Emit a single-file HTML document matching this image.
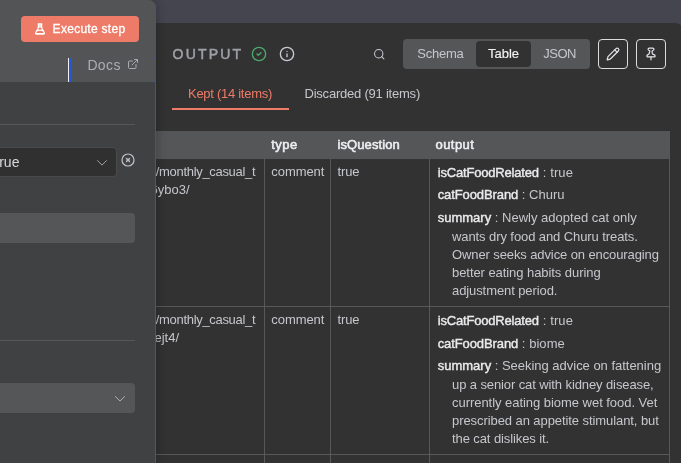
<!DOCTYPE html>
<html><head><meta charset="utf-8"><title>n8n node output</title>
<style>
html,body{margin:0;padding:0}
body{width:681px;height:463px;overflow:hidden;position:relative;background:#44454f;font-family:"Liberation Sans",sans-serif;font-size:13px;color:#c6c7cc}
.abs{position:absolute}
.t{position:absolute;white-space:nowrap;line-height:18px;height:18px}
.k{color:#ebebee;-webkit-text-stroke:.4px #ebebee}
.kh{color:#efeff2;-webkit-text-stroke:.55px #efeff2}
#out{left:150px;top:23px;width:532.5px;height:450px;background:#323232;border-radius:0 8px 0 0}
#left{left:0;top:0;width:155px;height:463px;background:#404143;border-right:1px solid #555658;border-radius:0 8px 0 0;box-shadow:2px 0 10px rgba(0,0,0,.2)}
#lhead{left:0;top:0;width:156px;height:82px;background:#535456;border-radius:0 8px 0 0}
.vline{position:absolute;width:1px;background:#585858}
.hline{position:absolute;height:1px;background:#585858}
.g{left:0;top:0;width:681px;height:463px;will-change:transform}
svg.i{position:absolute;fill:none;stroke-width:2;stroke-linecap:round;stroke-linejoin:round;overflow:visible}
</style></head><body>

<!-- OUTPUT PANEL -->
<div id="out" class="abs"></div>
<svg class="i" style="left:251px;top:45.9px;stroke:#4caa6c" width="16" height="16" viewBox="0 0 24 24"><circle cx="12" cy="12" r="10"/><path d="m9 12 2 2 4-4"/></svg>
<svg class="i" style="left:278.9px;top:45.9px;stroke:#c8cad4" width="16" height="16" viewBox="0 0 24 24"><circle cx="12" cy="12" r="10"/><path d="M12 16v-4"/><path d="M12 8h.01"/></svg>

<div class="abs" style="left:172px;top:108px;width:117px;height:2px;background:#ee7b68"></div>

<svg class="i" style="left:372.8px;top:47.7px;stroke:#c8cad4" width="12.5" height="12.5" viewBox="0 0 24 24"><path d="m21 21-4.34-4.34"/><circle cx="11" cy="11" r="8"/></svg>

<div class="abs" style="left:403px;top:39px;width:187px;height:30px;background:#555658;border-radius:4px"></div>
<div class="abs" style="left:475.5px;top:41px;width:55.5px;height:26px;background:#323232;border-radius:4px"></div>

<div class="abs" style="left:598px;top:39px;width:28px;height:28px;border:1px solid #dcdde0;border-radius:4px"></div>
<div class="abs" style="left:636px;top:39px;width:28px;height:28px;border:1px solid #dcdde0;border-radius:4px"></div>
<svg class="i" style="left:606.1px;top:46.9px;stroke:#e2e3e8;stroke-width:2.1" width="14" height="14" viewBox="0 0 24 24"><path d="M21.174 6.812a1 1 0 0 0-3.986-3.987L3.842 16.174a2 2 0 0 0-.5.83l-1.321 4.352a.5.5 0 0 0 .623.622l4.353-1.32a2 2 0 0 0 .83-.497z"/><path d="m15 5 4 4"/></svg>
<svg class="i" style="left:644px;top:46.8px;stroke:#e2e3e8;stroke-width:2.1" width="14" height="14" viewBox="0 0 24 24"><path d="M12 17v5"/><path d="M9 10.76a2 2 0 0 1-1.11 1.79l-1.78.9A2 2 0 0 0 5 15.24V16a1 1 0 0 0 1 1h12a1 1 0 0 0 1-1v-.76a2 2 0 0 0-1.11-1.79l-1.78-.9A2 2 0 0 1 14 10.76V7a1 1 0 0 1 1-1 2 2 0 0 0 0-4H9a2 2 0 0 0 0 4 1 1 0 0 1 1 1z"/></svg>

<!-- TABLE -->
<div class="abs" style="left:150px;top:131px;width:520px;height:28px;background:#555658"></div>

<div class="vline" style="left:264px;top:159px;height:304px"></div>
<div class="vline" style="left:330px;top:159px;height:304px"></div>
<div class="vline" style="left:429px;top:159px;height:304px"></div>
<div class="vline" style="left:669px;top:159px;height:304px"></div>
<div class="hline" style="left:150px;top:306px;width:520px"></div>
<div class="hline" style="left:150px;top:454px;width:520px"></div>

<div class="abs g"><div id="ttl" class="t" style="left:172.6px;top:45px;font-size:14px;color:#9fa0a8;-webkit-text-stroke:.5px #9fa0a8"><span id="ttl_0" style="letter-spacing:2.173px">OUTPUT</span></div>
<div id="kept" class="t" style="left:188px;top:85px;color:#ee7b68"><span id="kept_0" style="letter-spacing:-0.277px">Kept (14 items)</span></div>
<div id="disc" class="t" style="left:304.5px;top:85px"><span id="disc_0" style="letter-spacing:-0.222px">Discarded (91 items)</span></div>
<div id="schema" class="t" style="left:417.3px;top:45px"><span id="schema_0" style="letter-spacing:-0.251px">Schema</span></div>
<div id="table" class="t" style="left:488.0px;top:45px;color:#f2f2f4;-webkit-text-stroke:.15px #f2f2f4"><span id="table_0" style="letter-spacing:-0.016px">Table</span></div>
<div id="json" class="t" style="left:543.3px;top:45px"><span id="json_0" style="letter-spacing:-0.493px">JSON</span></div>
<div id="h1" class="t" style="left:271.3px;top:136px"><span id="h1_0" class="kh" style="letter-spacing:0.430px">type</span></div>
<div id="h2" class="t" style="left:337.5px;top:136px"><span id="h2_0" class="kh" style="letter-spacing:0.098px">isQuestion</span></div>
<div id="h3" class="t" style="left:435.5px;top:136px"><span id="h3_0" class="kh" style="letter-spacing:0.441px">output</span></div>
<div id="r1a" class="t" style="left:155.8px;top:163px"><span id="r1a_0" style="letter-spacing:-0.317px">/monthly_casual_t</span></div>
<div id="r1b" class="t" style="left:150.6px;top:181px"><span id="r1b_0">6ybo3/</span></div>
<div id="r1c" class="t" style="left:271.3px;top:163px"><span id="r1c_0" style="letter-spacing:-0.067px">comment</span></div>
<div id="r1d" class="t" style="left:337.5px;top:163px"><span id="r1d_0" style="letter-spacing:-0.102px">true</span></div>
<div id="r1e" class="t" style="left:437.7px;top:164px"><span id="r1e_0" class="k" style="letter-spacing:-0.179px">isCatFoodRelated</span><span id="r1e_1" style="letter-spacing:0.136px"> : true</span></div>
<div id="r1f" class="t" style="left:437.7px;top:186px"><span id="r1f_0" class="k" style="letter-spacing:-0.098px">catFoodBrand</span><span id="r1f_1" style="letter-spacing:0.006px"> : Churu</span></div>
<div id="r1g" class="t" style="left:437.7px;top:209px"><span id="r1g_0" class="k" style="letter-spacing:0.007px">summary</span><span id="r1g_1" style="letter-spacing:0.010px"> : Newly adopted cat only</span></div>
<div id="r1h" class="t" style="left:452px;top:228px"><span id="r1h_0" style="letter-spacing:-0.088px">wants dry food and Churu treats.</span></div>
<div id="r1i" class="t" style="left:452px;top:246px"><span id="r1i_0" style="letter-spacing:-0.106px">Owner seeks advice on encouraging</span></div>
<div id="r1j" class="t" style="left:452px;top:264px"><span id="r1j_0" style="letter-spacing:-0.064px">better eating habits during</span></div>
<div id="r1k" class="t" style="left:452px;top:282px"><span id="r1k_0" style="letter-spacing:-0.092px">adjustment period.</span></div>
<div id="r2a" class="t" style="left:155.8px;top:311px"><span id="r2a_0" style="letter-spacing:-0.317px">/monthly_casual_t</span></div>
<div id="r2b" class="t" style="left:147.2px;top:329px"><span id="r2b_0">6ejt4/</span></div>
<div id="r2c" class="t" style="left:271.3px;top:311px"><span id="r2c_0" style="letter-spacing:-0.067px">comment</span></div>
<div id="r2d" class="t" style="left:337.5px;top:311px"><span id="r2d_0" style="letter-spacing:-0.102px">true</span></div>
<div id="r2e" class="t" style="left:437.7px;top:312px"><span id="r2e_0" class="k" style="letter-spacing:-0.179px">isCatFoodRelated</span><span id="r2e_1" style="letter-spacing:0.136px"> : true</span></div>
<div id="r2f" class="t" style="left:437.7px;top:335px"><span id="r2f_0" class="k" style="letter-spacing:-0.098px">catFoodBrand</span><span id="r2f_1" style="letter-spacing:0.044px"> : biome</span></div>
<div id="r2g" class="t" style="left:437.7px;top:357px"><span id="r2g_0" class="k" style="letter-spacing:0.007px">summary</span><span id="r2g_1" style="letter-spacing:-0.022px"> : Seeking advice on fattening</span></div>
<div id="r2h" class="t" style="left:452px;top:376px"><span id="r2h_0" style="letter-spacing:-0.101px">up a senior cat with kidney disease,</span></div>
<div id="r2i" class="t" style="left:452px;top:394px"><span id="r2i_0" style="letter-spacing:-0.039px">currently eating biome wet food. Vet</span></div>
<div id="r2j" class="t" style="left:452px;top:412px"><span id="r2j_0" style="letter-spacing:-0.075px">prescribed an appetite stimulant, but</span></div>
<div id="r2k" class="t" style="left:452px;top:430px"><span id="r2k_0" style="letter-spacing:-0.095px">the cat dislikes it.</span></div>
<div id="r3a" class="t" style="left:155.8px;top:459px"><span id="r3a_0" style="letter-spacing:-0.317px">/monthly_casual_t</span></div></div>
<!-- LEFT PANEL -->
<div id="left" class="abs"></div>
<div id="lhead" class="abs"></div>
<div class="abs" style="left:21px;top:16px;width:118px;height:26px;background:#ee7b68;border-radius:4px"></div>
<svg class="abs" style="left:34px;top:22px;overflow:visible" width="12" height="14" viewBox="0 0 12 14"><rect x="3.9" y="1.100" width="4.2" height="4.6" fill="#fff" fill-opacity=".8"/><path d="M4.400 1.500v4.300L1.700 10.700a.8.800 0 0 0 .7 1.200h7.200a.8.800 0 0 0 .7-1.200L7.600 5.800V1.500" fill="none" stroke="#fff" stroke-width="1.200" stroke-linejoin="round"/><path d="M2.500 8.900Q6 7.200 9.500 8.900" fill="none" stroke="#fff" stroke-width="1.300"/><path d="M2 11.700h8" stroke="#fff" stroke-width="1.600" stroke-linecap="round"/><path d="M5.200 6.300l1.600 0L6 7.300z" fill="#ee7b68"/></svg>
<div class="abs" style="left:68px;top:58px;width:1px;height:24px;background:#f0f0f4"></div>
<div class="abs" style="left:69px;top:58px;width:2px;height:24px;background:#2558d2"></div>
<div class="abs" style="left:71px;top:58px;width:1px;height:1px;background:#2558d2"></div>
<div class="abs" style="left:71px;top:81px;width:1px;height:1px;background:#2558d2"></div>
<div class="abs" style="left:154px;top:58px;width:1px;height:1px;background:#3a60c4"></div>
<div class="abs" style="left:154px;top:81px;width:1px;height:1px;background:#3a60c4"></div>
<svg class="i" style="left:127px;top:58px;stroke:#a9aab0" width="12" height="12" viewBox="0 0 24 24"><path d="M15 3h6v6"/><path d="M10 14 21 3"/><path d="M18 13v6a2 2 0 0 1-2 2H5a2 2 0 0 1-2-2V8a2 2 0 0 1 2-2h6"/></svg>

<div class="hline" style="left:0;top:124px;width:135px;background:#565759"></div>
<div class="abs" style="left:-10px;top:146.500px;width:125.2px;height:28.200px;background:#303030;border:1px solid #4a4a4b;border-radius:4px;box-sizing:content-box"></div>
<svg class="i" style="left:95px;top:155.9px;stroke:#a0a1a6;stroke-width:1.700" width="14" height="14" viewBox="0 0 24 24"><path d="m4.2 7.8 7.8 7.8 7.8-7.800"/></svg>
<svg class="i" style="left:121px;top:153px;stroke:#c0c1c6;stroke-width:2.1" width="14" height="14" viewBox="0 0 24 24"><circle cx="12" cy="12" r="10.3"/><path d="m14.600 9.400-5.200 5.200" stroke-width="2.400"/><path d="m9.400 9.400 5.200 5.200" stroke-width="2.400"/></svg>

<div class="abs" style="left:-10px;top:212.5px;width:145px;height:30.5px;background:#555658;border-radius:4px"></div>
<div class="hline" style="left:0;top:340px;width:135px;background:#565759"></div>
<div class="abs" style="left:-10px;top:383px;width:145px;height:30px;background:#555658;border-radius:4px"></div>
<svg class="i" style="left:113px;top:392px;stroke:#b4b5ba;stroke-width:1.700" width="14" height="14" viewBox="0 0 24 24"><path d="m4.2 7.8 7.8 7.8 7.8-7.800"/></svg>
<div class="abs g"><div id="exec" class="t" style="left:52.6px;top:19.5px;font-size:12px;color:#fff;-webkit-text-stroke:.3px #fff"><span id="exec_0" style="letter-spacing:0.285px">Execute step</span></div>
<div id="docs" class="t" style="left:87.4px;top:56px;font-size:14px;color:#adaeb4"><span id="docs_0" style="letter-spacing:0.373px">Docs</span></div>
<div id="true" class="t" style="left:-4.7px;top:153px;font-size:14px;color:#d8d8dc"><span id="true_0">true</span></div></div>
</body></html>
